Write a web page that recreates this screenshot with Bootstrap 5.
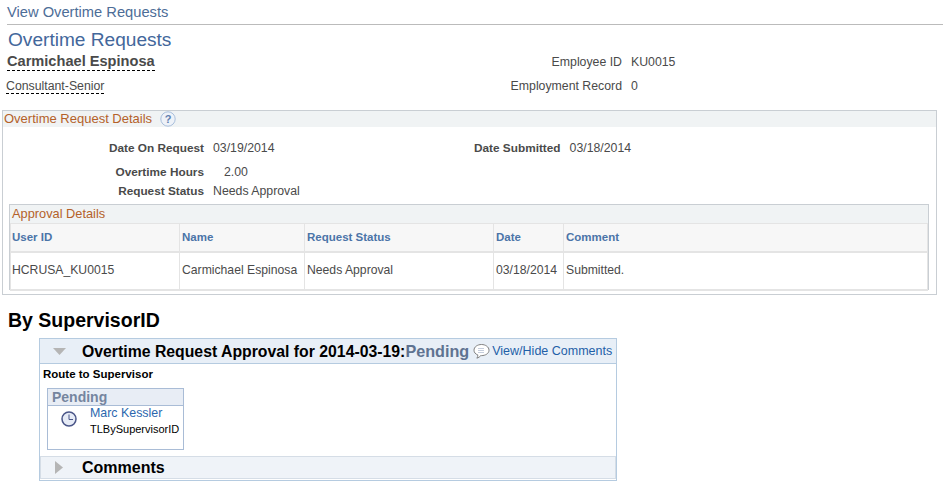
<!DOCTYPE html>
<html lang="en">
<head>
  <meta charset="UTF-8" />
  <meta name="viewport" content="width=device-width, initial-scale=1.0" />
  <title>View Overtime Requests</title>
  <link href="https://cdn.jsdelivr.net/npm/bootstrap@5.3.3/dist/css/bootstrap.min.css" rel="stylesheet" />
  <style>
    body { font-family: "Liberation Sans", Arial, sans-serif; font-size: 12.3px; color: #4a4a4a; background: #fff; overflow: hidden; }
    .crumb { margin-left: 7px; height: 25px; border-bottom: 1px solid #bbb; font-size: 14.7px; line-height: 25px; color: #4d6d97; }
    .page-head { margin: 4px 0 0 8px; font-size: 19.1px; line-height: 21px; color: #43679b; font-weight: 400; }
    .who { height: 60px; }
    .who-left { width: 500px; padding-left: 7px; }
    .who-name { font-size: 14.6px; font-weight: 700; line-height: 16px; margin-top: 3px; padding-bottom: 1px; border-bottom: 1px dashed #000; }
    .who-job { line-height: 14px; margin: 8px 0 0 -1px; border-bottom: 1px dashed #000; }
    .who-row { height: 24px; line-height: 24px; }
    .who-label { width: 122px; text-align: right; margin-right: 9px; white-space: nowrap; }
    .who-right { margin-top: 0; }
    .box-main { margin: 0 6px 0 2px; height: 185px; border: 1px solid #c9ced3; }
    .box-head { background: #f0f3f4; height: 16px; line-height: 16px; font-size: 13px; color: #b4612a; padding-left: 1px; }
    .help-ico { margin: -1px 0 0 8px; }
    .field-row { height: 19px; line-height: 19px; }
    .field-first { margin-top: 12px; }
    .field-second { margin-top: 5px; }
    .field-label { width: 201px; text-align: right; font-size: 11.8px; font-weight: 700; margin-right: 9px; }
    .field-label2 { width: 286px; text-align: right; font-size: 11.8px; font-weight: 700; margin-right: 9px; }
    .field-num { margin-left: 11px; }
    .box-inner { margin: 3px 7px 0 6px; height: 86px; border: 1px solid #c9ced3; }
    .box-inner .box-head { height: 18px; line-height: 18px; font-size: 12.8px; padding-left: 2px; }
    .appr-table { width: 100%; table-layout: fixed; margin: 0; font-size: 12.2px; border-collapse: collapse; }
    .appr-table th, .appr-table td { padding: 0 2px; border: 0; border-left: 1px solid #e4e4e4; background: transparent; color: #4a4a4a; box-shadow: none; white-space: nowrap; vertical-align: middle; }
    .appr-table th:first-child, .appr-table td:first-child { padding-left: 1px; }
    .appr-table th:last-child, .appr-table td:last-child { border-right: 1px solid #e4e4e4; }
    .appr-table th { height: 28px; background: #f7f7f7; color: #4b74a8; font-size: 11.5px; font-weight: 700; border-top: 1px solid #e4e4e4; border-bottom: 2px solid #e4e4e4; }
    .appr-table td { height: 38px; border-bottom: 2px solid #e4e4e4; }
    .by-head { margin: 14px 0 0 8px; font-size: 19.5px; line-height: 22px; font-weight: 700; color: #000; }
    .flow { margin: 7px 0 0 39px; width: 578px; height: 143px; border: 1px solid #b5cbe0; }
    .flow-head { height: 25px; background: #e8eff7; border-bottom: 1px solid #b5cbe0; padding-left: 13px; }
    .flow-title { font-size: 15.8px; font-weight: 700; color: #000; margin-left: 16px; white-space: nowrap; }
    .flow-state { font-size: 16.2px; font-weight: 700; color: #5f7391; }
    .flow-link { color: #1f5fa8; text-decoration: none; white-space: nowrap; margin-left: 2px; font-size: 12.5px; }
    .chat-ico { margin-left: 4px; }
    .route { font-size: 11.5px; font-weight: 700; color: #000; margin: 3px 0 0 3px; line-height: 15px; }
    .step { margin: 6px 0 0 7px; width: 137px; height: 62px; border: 1px solid #a9bcd6; }
    .step-head { height: 17px; line-height: 17px; background: #e8edf5; border-bottom: 1px solid #a9bcd6; padding-left: 4px; font-size: 14px; font-weight: 700; color: #75859f; }
    .clock-ico { margin: 5px 0 0 13px; }
    .step-name { color: #2b67ae; line-height: 14px; margin-left: 13px; font-size: 12.4px; }
    .step-group { color: #000; font-size: 11px; line-height: 14px; margin: 2px 0 0 13px; white-space: nowrap; }
    .flow-foot { margin: 6px 0 0; height: 23px; background: #eff3f8; border: 1px solid #d5dde6; padding-left: 14px; }
    .flow-foot span { font-size: 16px; font-weight: 700; color: #000; margin-left: 19px; }
  </style>
</head>
<body>
  <div class="crumb">View Overtime Requests</div>
  <h1 class="page-head">Overtime Requests</h1>

  <div class="who d-flex">
    <div class="who-left d-flex flex-column align-items-start">
      <div class="who-name">Carmichael Espinosa</div>
      <div class="who-job">Consultant-Senior</div>
    </div>
    <div class="who-right">
      <div class="who-row d-flex"><div class="who-label">Employee ID</div><div>KU0015</div></div>
      <div class="who-row d-flex"><div class="who-label">Employment Record</div><div>0</div></div>
    </div>
  </div>

  <div class="box-main">
    <div class="box-head d-flex align-items-center">
      Overtime Request Details
      <svg class="help-ico" width="16" height="16" viewBox="0 0 16 16">
        <circle cx="8" cy="8" r="7.2" fill="#eef2f8" stroke="#a9bfdc" />
        <text x="8" y="12" text-anchor="middle" font-size="11" font-weight="700" fill="#5f7fb0" font-family="Liberation Sans">?</text>
      </svg>
    </div>
    <div class="field-row field-first d-flex">
      <div class="field-label">Date On Request</div><div>03/19/2014</div>
      <div class="field-label2">Date Submitted</div><div>03/18/2014</div>
    </div>
    <div class="field-row field-second d-flex">
      <div class="field-label">Overtime Hours</div><div class="field-num">2.00</div>
    </div>
    <div class="field-row d-flex">
      <div class="field-label">Request Status</div><div>Needs Approval</div>
    </div>
    <div class="box-inner">
      <div class="box-head">Approval Details</div>
      <table class="table appr-table">
        <colgroup>
          <col style="width: 169px" /><col style="width: 125px" /><col style="width: 189px" /><col style="width: 70px" /><col />
        </colgroup>
        <thead>
          <tr><th>User ID</th><th>Name</th><th>Request Status</th><th>Date</th><th>Comment</th></tr>
        </thead>
        <tbody>
          <tr><td>HCRUSA_KU0015</td><td>Carmichael Espinosa</td><td>Needs Approval</td><td>03/18/2014</td><td>Submitted.</td></tr>
        </tbody>
      </table>
    </div>
  </div>

  <div class="by-head">By SupervisorID</div>

  <div class="flow">
    <div class="flow-head d-flex align-items-center">
      <svg width="13" height="7" viewBox="0 0 13 7"><path d="M0 0H13L6.500 7Z" fill="#b5b5b5" /></svg>
      <span class="flow-title">Overtime Request Approval for 2014-03-19:<span class="flow-state">Pending</span></span>
      <svg class="chat-ico" width="17" height="17" viewBox="0 0 17 17">
        <path d="M8.500 1.500C4.600 1.500 1 3.800 1 7.200c0 2.300 1.500 3.900 3.800 4.700.1 1.100-.2 2.200-.9 3.300 1.700-.5 3-1.500 3.900-2.600h.7c3.900 0 7.500-2.100 7.500-5.400S12.400 1.500 8.500 1.500Z" fill="#fff" stroke="#808080" />
        <path d="M5.500 5.500h6M5.500 7.500h6M5.500 9.500h6" stroke="#8a9ab8" stroke-dasharray="1 1" />
      </svg>
      <a class="flow-link" href="#">View/Hide Comments</a>
    </div>
    <div class="route">Route to Supervisor</div>
    <div class="step">
      <div class="step-head">Pending</div>
      <div class="d-flex">
        <svg class="clock-ico" width="16" height="16" viewBox="0 0 16 16">
          <circle cx="8" cy="8" r="7" fill="#e6ebf6" stroke="#4a5688" stroke-width="1.500" />
          <path d="M8 3.500V8.500H12" fill="none" stroke="#4a5688" />
        </svg>
        <div>
          <div class="step-name">Marc Kessler</div>
          <div class="step-group">TLBySupervisorID</div>
        </div>
      </div>
    </div>
    <div class="flow-foot d-flex align-items-center">
      <svg width="8" height="13" viewBox="0 0 8 13"><path d="M0 0V13L8 6.500Z" fill="#b5b5b5" /></svg>
      <span>Comments</span>
    </div>
  </div>

  <script src="https://cdn.jsdelivr.net/npm/bootstrap@5.3.3/dist/js/bootstrap.bundle.min.js"></script>
</body>
</html>
